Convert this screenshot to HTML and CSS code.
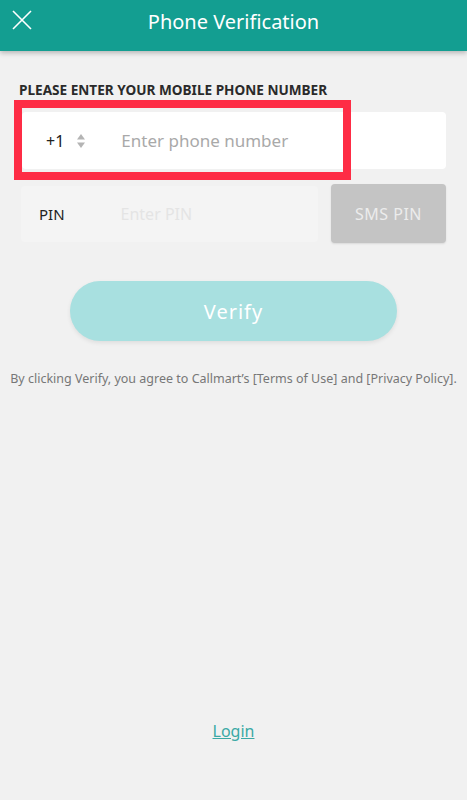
FILE: index.html
```html
<!DOCTYPE html>
<html lang="en">
<head>
    <meta charset="utf-8">
    <meta name="viewport" content="width=device-width, initial-scale=1">
    <title>Phone Verification</title>
    <link rel="stylesheet" href="styles.css">
</head>
<body>
    <div class="header">
        <button class="close-btn" aria-label="Close">
            <svg width="20" height="20" viewBox="0 0 20 20">
                <path d="M1 1 L19 19 M19 1 L1 19" stroke="#fff" stroke-width="1.6" fill="none"/>
            </svg>
        </button>
        <h1>Phone Verification</h1>
    </div>

    <div class="content">
        <p class="label">PLEASE ENTER YOUR MOBILE PHONE NUMBER</p>

        <div class="phone-row">
            <div class="field phone-field">
                <span class="code">+1</span>
                <span class="spinner">
                    <svg width="8" height="16" viewBox="0 0 8 16">
                        <path d="M4 1 L8 6.5 L0 6.5 Z" fill="#b4b4b4"/>
                        <path d="M4 15 L8 9.5 L0 9.5 Z" fill="#b4b4b4"/>
                    </svg>
                </span>
                <span class="placeholder">Enter phone number</span>
            </div>
            <div class="highlight"></div>
        </div>

        <div class="pin-row">
            <div class="field pin-field">
                <span class="pin-label">PIN</span>
                <span class="placeholder light">Enter PIN</span>
            </div>
            <button class="sms-btn">SMS PIN</button>
        </div>

        <button class="verify-btn">Verify</button>

        <p class="terms">By clicking Verify, you agree to Callmart’s [Terms of Use] and [Privacy Policy].</p>
    </div>

    <div class="footer">
        <a href="#" class="login">Login</a>
    </div>
</body>
</html>
```

FILE: styles.css
```css
body {
    margin: 0;
    height: 800px;
    display: flex;
    flex-direction: column;
    background-color: #f1f1f1;
    font-family: "Noto Sans", "Open Sans", sans-serif;
}
.header {
    height: 51px;
    background-color: #139e91;
    box-shadow: 0px 2px 5px rgba(0, 0, 0, 0.25);
    display: flex;
    align-items: center;
    justify-content: center;
    position: relative;
}
.close-btn {
    position: absolute;
    left: 12px;
    top: 10px;
    background: none;
    border: none;
    padding: 0;
    width: 20px;
    height: 20px;
}
h1 {
    margin: 0;
    margin-top: -8px;
    color: #fff;
    font-size: 20px;
    font-weight: normal;
}
.content {
    padding: 0 21px;
    flex: 1;
}
.label {
    margin: 29px 0 0 -2px;
    font-size: 13.6px;
    font-weight: bold;
    color: #2a2a2a;
}
.phone-row {
    position: relative;
    margin-top: 13px;
}
.field {
    display: flex;
    align-items: center;
    border-radius: 4px;
}
.phone-field {
    height: 57px;
    background: #fff;
    margin-left: 1px;
}
.code {
    margin-left: 24px;
    font-size: 16px;
    color: #222;
}
.spinner {
    margin-left: 13px;
    display: flex;
}
.placeholder {
    margin-left: 36px;
    font-size: 17px;
    color: #a9a9a9;
}
.highlight {
    position: absolute;
    left: -7px;
    top: -12px;
    width: 321px;
    height: 64px;
    border: 8px solid #fe2c45;
}
.pin-row {
    display: flex;
    justify-content: space-between;
    align-items: center;
    margin-top: 15px;
}
.pin-field {
    width: 297px;
    height: 56px;
    background: #f4f4f4;
}
.pin-label {
    margin-left: 18px;
    font-size: 15px;
    color: #222;
}
.placeholder.light {
    margin-left: 56px;
    font-size: 16px;
    color: #e4e4e4;
}
.sms-btn {
    width: 115px;
    height: 59px;
    border: none;
    border-radius: 4px;
    background-color: #c4c4c4;
    color: #ececec;
    font-family: inherit;
    font-size: 16px;
    letter-spacing: 0.5px;
    box-shadow: 0px 1px 2px rgba(0, 0, 0, 0.1);
}
.verify-btn {
    display: block;
    margin: 38px auto 0;
    width: 327px;
    height: 60px;
    border: none;
    border-radius: 30px;
    background-color: #a8e0e0;
    color: #fff;
    font-family: inherit;
    font-size: 20px;
    letter-spacing: 1px;
    box-shadow: 0px 2px 4px rgba(0, 0, 0, 0.08);
}
.terms {
    margin: 29px -12px 0;
    text-align: center;
    font-size: 12.5px;
    color: #777;
    white-space: nowrap;
}
.footer {
    height: 80px;
    text-align: center;
}
.login {
    color: #3aa9a5;
    font-size: 16px;
}
```
